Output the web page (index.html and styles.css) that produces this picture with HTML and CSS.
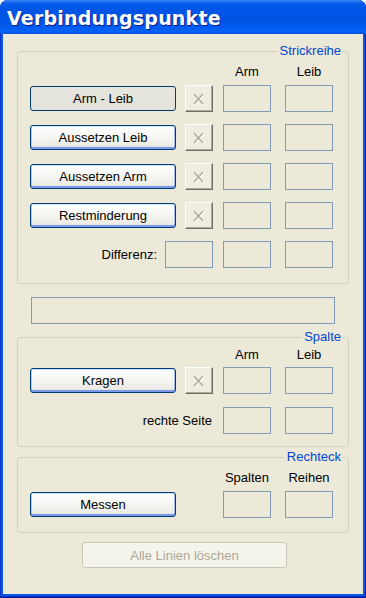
FILE: index.html
```html
<!DOCTYPE html>
<html lang="de">
<head>
    <meta charset="UTF-8">
    <meta name="viewport" content="width=device-width, initial-scale=1.0">
    <title>Verbindungspunkte</title>
    <link rel="stylesheet" href="styles.css">
</head>
<body>

<div class="window">
    <div class="titlebar"><span class="title">Verbindungspunkte</span></div>

    <div class="client">

        <fieldset class="group group-strick">
            <legend>Strickreihe</legend>
            <div class="inner">
                <div class="heads"><span class="head">Arm</span><span class="head">Leib</span></div>
                <div class="rows">
                    <div class="row">
                        <button class="btn pressed">Arm - Leib</button>
                        <button class="xbtn"><svg width="12" height="12" viewBox="0 0 12 12"><path d="M2 2 L11 12 M11 2 L2 12" stroke="#fff" stroke-width="1.3" fill="none"/><path d="M1 1 L10 11 M10 1 L1 11" stroke="#aca899" stroke-width="1.3" fill="none"/></svg></button>
                        <span class="box"></span><span class="box"></span>
                    </div>
                    <div class="row">
                        <button class="btn">Aussetzen Leib</button>
                        <button class="xbtn"><svg width="12" height="12" viewBox="0 0 12 12"><path d="M2 2 L11 12 M11 2 L2 12" stroke="#fff" stroke-width="1.3" fill="none"/><path d="M1 1 L10 11 M10 1 L1 11" stroke="#aca899" stroke-width="1.3" fill="none"/></svg></button>
                        <span class="box"></span><span class="box"></span>
                    </div>
                    <div class="row">
                        <button class="btn">Aussetzen Arm</button>
                        <button class="xbtn"><svg width="12" height="12" viewBox="0 0 12 12"><path d="M2 2 L11 12 M11 2 L2 12" stroke="#fff" stroke-width="1.3" fill="none"/><path d="M1 1 L10 11 M10 1 L1 11" stroke="#aca899" stroke-width="1.3" fill="none"/></svg></button>
                        <span class="box"></span><span class="box"></span>
                    </div>
                    <div class="row">
                        <button class="btn">Restminderung</button>
                        <button class="xbtn"><svg width="12" height="12" viewBox="0 0 12 12"><path d="M2 2 L11 12 M11 2 L2 12" stroke="#fff" stroke-width="1.3" fill="none"/><path d="M1 1 L10 11 M10 1 L1 11" stroke="#aca899" stroke-width="1.3" fill="none"/></svg></button>
                        <span class="box"></span><span class="box"></span>
                    </div>
                    <div class="row">
                        <span class="label">Differenz:</span>
                        <span class="box diff"></span><span class="box"></span><span class="box"></span>
                    </div>
                </div>
            </div>
        </fieldset>

        <div class="wide"></div>

        <fieldset class="group group-spalte">
            <legend>Spalte</legend>
            <div class="inner">
                <div class="heads"><span class="head">Arm</span><span class="head">Leib</span></div>
                <div class="rows">
                    <div class="row">
                        <button class="btn">Kragen</button>
                        <button class="xbtn"><svg width="12" height="12" viewBox="0 0 12 12"><path d="M2 2 L11 12 M11 2 L2 12" stroke="#fff" stroke-width="1.3" fill="none"/><path d="M1 1 L10 11 M10 1 L1 11" stroke="#aca899" stroke-width="1.3" fill="none"/></svg></button>
                        <span class="box"></span><span class="box"></span>
                    </div>
                    <div class="row">
                        <span class="label label-seite">rechte Seite</span>
                        <span class="box"></span><span class="box"></span>
                    </div>
                </div>
            </div>
        </fieldset>

        <fieldset class="group group-rechteck">
            <legend>Rechteck</legend>
            <div class="inner">
                <div class="heads"><span class="head">Spalten</span><span class="head">Reihen</span></div>
                <div class="rows">
                    <div class="row">
                        <button class="btn">Messen</button>
                        <span class="xspace"></span>
                        <span class="box"></span><span class="box"></span>
                    </div>
                </div>
            </div>
        </fieldset>

        <button class="btn-disabled" disabled>Alle Linien löschen</button>

    </div>
</div>

</body>
</html>
```

FILE: styles.css
```css
body {
    margin: 0;
    background-color: #ffffff;
    font-family: "Liberation Sans", Arial, sans-serif;
    font-size: 13px;
}

.window {
    width: 366px;
    height: 598px;
    box-sizing: border-box;
    display: flex;
    flex-direction: column;
    background-color: #0a56e8;
    border-radius: 8px 8px 0 0;
    padding: 0 3px 4px 3px;
    box-shadow: inset 1px 0 0 #0838c8, inset -1px 0 0 #0022a8, inset 0 -1px 0 #001a8c, inset 0 -2px 0 #0831c9;
}

.titlebar {
    height: 34px;
    margin: 0 -3px;
    padding-left: 7px;
    display: flex;
    align-items: center;
    border-radius: 8px 8px 0 0;
    background: linear-gradient(#3d8cf6 0, #0a5eec 3px, #0056e8 8px, #0053e2 20px, #005cf2 28px, #0664f8 31px, #0050dc 34px);
}

.title {
    font-family: "DejaVu Sans", sans-serif;
    font-weight: bold;
    font-size: 19px;
    letter-spacing: 0.2px;
    color: #ffffff;
    text-shadow: 1px 1px 0 #0f1a8a;
    margin-top: 1px;
}

.client {
    flex: 1;
    background-color: #ece9d8;
    display: flex;
    flex-direction: column;
}

.group {
    margin: 0 14px;
    padding: 0;
    border: 1px solid #d0d0bf;
    border-radius: 3px;
    min-width: 0;
}

.group legend {
    margin-left: auto;
    margin-right: 6px;
    padding: 0 1px 0 2px;
    line-height: 14px;
    color: #0046d5;
}

.inner {
    padding: 0 15px 0 12px;
}

.heads {
    display: flex;
    justify-content: flex-end;
    line-height: 15px;
}

.head {
    width: 48px;
    text-align: center;
}

.head + .head {
    margin-left: 14px;
}

.rows {
    display: flex;
    flex-direction: column;
}

.row {
    display: flex;
    justify-content: flex-end;
    align-items: center;
    height: 27px;
}

.group-strick {
    margin-top: 10px;
}

.group-strick .inner {
    padding-top: 6px;
    padding-bottom: 15px;
}

.group-strick .heads {
    margin-bottom: 6px;
}

.group-strick .rows {
    gap: 12px;
}

.group-spalte {
    margin-top: 6px;
}

.group-spalte .inner {
    padding-top: 3px;
    padding-bottom: 12px;
}

.group-spalte .heads {
    margin-bottom: 5px;
}

.group-spalte .rows {
    gap: 13px;
}

.group-rechteck {
    margin-top: 3px;
}

.group-rechteck .inner {
    padding-top: 6px;
    padding-bottom: 14px;
}

.group-rechteck .heads {
    margin-bottom: 6px;
}

.btn {
    width: 146px;
    height: 25px;
    margin-right: 9px;
    padding: 0;
    font-family: inherit;
    font-size: 13px;
    color: #000000;
    border: 1px solid #003c74;
    border-radius: 3px;
    background: linear-gradient(#ffffff, #f4f4f0 55%, #ecebe6 85%, #dcd8ce);
    box-shadow: inset 0 1px 0 #cee7ff, inset 0 -2px 0 #7c99ec, inset 1px 0 0 #b0c8f6, inset -1px 0 0 #a3bbf2;
}

.btn.pressed {
    background: linear-gradient(#e6e5de, #e2e1da);
    box-shadow: none;
}

.xbtn {
    width: 28px;
    height: 27px;
    margin-right: 10px;
    padding: 0;
    display: flex;
    align-items: center;
    justify-content: center;
    background-color: #efede2;
    border: 1px solid;
    border-color: #ffffff #716f64 #716f64 #ffffff;
    box-shadow: inset -1px -1px 0 #aca899;
}

.xspace {
    width: 28px;
    margin-right: 10px;
}

.box {
    width: 48px;
    height: 27px;
    box-sizing: border-box;
    border: 1px solid #7f9db9;
}

.box + .box {
    margin-left: 14px;
}

.box.diff {
    margin-right: 10px;
}

.box.diff + .box {
    margin-left: 0;
}

.label {
    margin-right: 8px;
}

.label-seite {
    margin-right: 11px;
}

.wide {
    height: 27px;
    margin: 13px 28px 0 28px;
    box-sizing: border-box;
    border: 1px solid #7f9db9;
}

.btn-disabled {
    width: 205px;
    height: 26px;
    margin: 9px 0 0 79px;
    padding: 0;
    font-family: inherit;
    font-size: 13px;
    color: #aca899;
    background-color: #f5f4ea;
    border: 1px solid #c9c7ba;
    border-radius: 3px;
}
```
